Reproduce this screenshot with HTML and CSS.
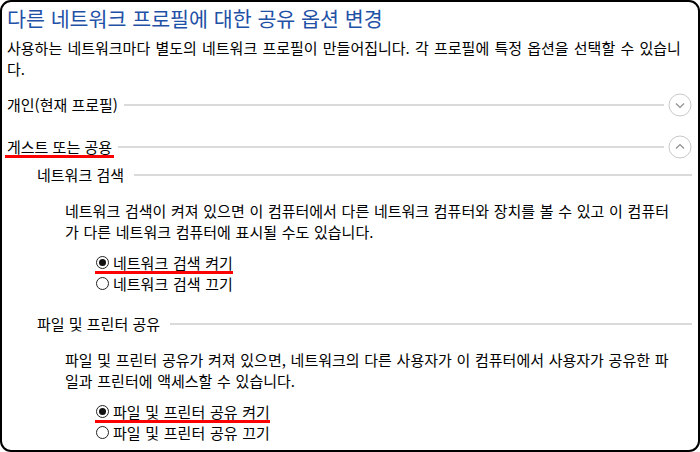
FILE: index.html
```html
<!DOCTYPE html>
<html lang="ko">
<head>
<meta charset="utf-8">
<link rel="stylesheet" href="styles.css">
</head>
<body>
<div class="frame">
  <h1 class="title">다른 네트워크 프로필에 대한 공유 옵션 변경</h1>
  <p class="intro">사용하는 네트워크마다 별도의 네트워크 프로필이 만들어집니다. 각 프로필에 특정 옵션을 선택할 수 있습니<br>다.</p>

  <div class="head first">
    <span class="head-text">개인(현재 프로필)</span>
    <span class="rule"></span>
    <span class="toggle"><svg width="24" height="24" viewBox="0 0 24 24"><circle cx="12" cy="12" r="11" fill="none" stroke="#c8c8c8" stroke-width="1"/><polyline points="8,10.5 12,14.5 16,10.5" fill="none" stroke="#8c8c8c" stroke-width="1.1"/></svg></span>
  </div>
  <div class="head second">
    <span class="head-text marked mark-head">게스트 또는 공용</span>
    <span class="rule"></span>
    <span class="toggle"><svg width="24" height="24" viewBox="0 0 24 24"><circle cx="12" cy="12" r="11" fill="none" stroke="#c8c8c8" stroke-width="1"/><polyline points="8,13.5 12,9.5 16,13.5" fill="none" stroke="#8c8c8c" stroke-width="1.1"/></svg></span>
  </div>

  <section class="sub sub-first">
    <div class="sub-head"><span class="sub-text">네트워크 검색</span><span class="rule"></span></div>
    <p class="desc">네트워크 검색이 켜져 있으면 이 컴퓨터에서 다른 네트워크 컴퓨터와 장치를 볼 수 있고 이 컴퓨터<br>가 다른 네트워크 컴퓨터에 표시될 수도 있습니다.</p>
    <div class="radios">
      <div class="radio marked mark-radio"><span class="dot checked"></span><span class="radio-text">네트워크 검색 켜기</span></div>
      <div class="radio"><span class="dot"></span><span class="radio-text">네트워크 검색 끄기</span></div>
    </div>
  </section>

  <section class="sub sub-second">
    <div class="sub-head"><span class="sub-text">파일 및 프린터 공유</span><span class="rule"></span></div>
    <p class="desc">파일 및 프린터 공유가 켜져 있으면, 네트워크의 다른 사용자가 이 컴퓨터에서 사용자가 공유한 파<br>일과 프린터에 액세스할 수 있습니다.</p>
    <div class="radios">
      <div class="radio marked mark-radio"><span class="dot checked"></span><span class="radio-text">파일 및 프린터 공유 켜기</span></div>
      <div class="radio"><span class="dot"></span><span class="radio-text">파일 및 프린터 공유 끄기</span></div>
    </div>
  </section>
</div>
</body>
</html>
```

FILE: styles.css
```css
* { box-sizing: border-box; }

html, body {
  margin: 0;
  padding: 0;
  background: #fff;
}

body {
  font-family: "Noto Sans CJK KR", "Noto Sans", sans-serif;
  color: #000;
  font-size: 15px;
}

.frame {
  width: 700px;
  height: 452px;
  border: 2px solid #000;
  border-radius: 11px;
  padding: 3px 6px 0 5px;
  overflow: hidden;
}

.title {
  margin: 0;
  font-size: 20.6px;
  font-weight: 400;
  line-height: 26px;
  color: #1f51a6;
  white-space: nowrap;
}

.intro {
  margin: 6px 0 0 0;
  line-height: 21px;
  word-spacing: 1px;
  white-space: nowrap;
}

.head {
  display: flex;
  align-items: center;
  height: 22px;
  line-height: 22px;
}

.head.first { margin-top: 15px; }
.head.second { margin-top: 20px; }

.head-text {
  white-space: nowrap;
  margin-right: 6px;
}

.rule {
  flex: 1;
  height: 2px;
  background: #dadada;
}

.toggle {
  width: 24px;
  height: 24px;
  margin-left: 4px;
  display: flex;
}

.marked { position: relative; }

.marked::after {
  content: "";
  position: absolute;
  height: 3px;
  background: #f00;
}

.mark-head::after {
  left: -2px;
  right: -2px;
  top: 19px;
}

.sub { padding-left: 30px; }
.sub-first { margin-top: 6px; }
.sub-second { margin-top: 19px; }

.sub-head {
  display: flex;
  align-items: center;
  height: 22px;
  line-height: 22px;
}

.sub-text {
  white-space: nowrap;
  margin-right: 10px;
}

.desc {
  margin: 14px 0 0 28px;
  line-height: 21px;
  word-spacing: 0.5px;
  white-space: nowrap;
}

.radios {
  margin: 10px 0 0 59px;
}

.radio {
  display: flex;
  align-items: center;
  width: fit-content;
  height: 21px;
  line-height: 21px;
}

.mark-radio::after {
  left: -1px;
  right: 0;
  top: 19px;
}

.dot {
  width: 13px;
  height: 13px;
  border: 1px solid #222;
  border-radius: 50%;
  margin-right: 4px;
  display: flex;
  align-items: center;
  justify-content: center;
  background: #fff;
}

.dot.checked::before {
  content: "";
  width: 7px;
  height: 7px;
  border-radius: 50%;
  background: #111;
}

.radio-text {
  white-space: nowrap;
  word-spacing: 0.5px;
}
```
